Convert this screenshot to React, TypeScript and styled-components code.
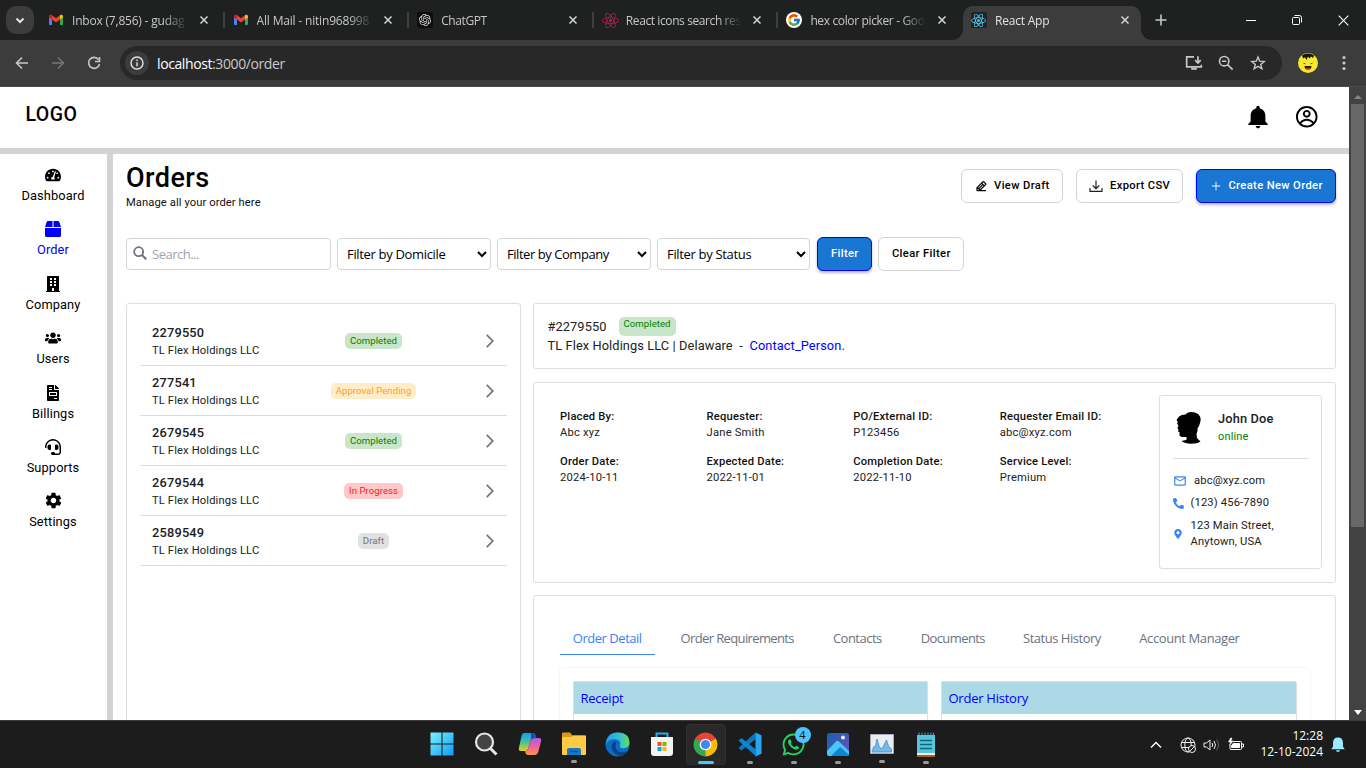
import React from "react";
import styled, { createGlobalStyle, css } from "styled-components";
import {
  FaTachometerAlt, FaBox, FaBuilding, FaUsers, FaHeadset, FaFileInvoice,
  FaReact, FaWhatsapp, FaPhoneAlt, FaMapMarkerAlt,
} from "react-icons/fa";
import { IoMdNotifications, IoMdSettings } from "react-icons/io";
import { CgProfile } from "react-icons/cg";
import { MdArrowForwardIos, MdMailOutline } from "react-icons/md";
import { AiOutlinePlus } from "react-icons/ai";
import { PiPencilLineBold } from "react-icons/pi";
import { FcGoogle } from "react-icons/fc";
import { SiOpenai } from "react-icons/si";

const ui = `"Segoe UI", "Open Sans", "Noto Sans", sans-serif`;

const Global = createGlobalStyle`
  * { box-sizing: border-box; }
  body { margin: 0; background: #fff; overflow: hidden; }
  svg { display: block; flex: none; }
`;

const Screen = styled.div`
  width: 1366px; height: 768px; display: flex; flex-direction: column; overflow: hidden;
  font-family: Roboto, sans-serif; color: #212121;
`;
const Spacer = styled.div<{ $w: number }>`width: ${p => p.$w}px; flex: none;`;

/* ---------- browser chrome ---------- */
const TabStrip = styled.div`
  height: 40px; flex: none; background: #1f2120; display: flex; align-items: center;
  font: 12px ${ui}; color: #c7c7c7; padding-left: 6px;
`;
const TabSearch = styled.div`
  width: 28px; height: 28px; border-radius: 10px; background: #3c3c3c;
  display: grid; place-items: center; flex: none;
`;
const Tab = styled.div<{ $w: number; $active?: boolean }>`
  width: ${p => p.$w}px; height: 34px; align-self: flex-end; flex: none;
  display: flex; align-items: center; padding: 0 ${p => (p.$active ? 10 : 13)}px 6px 8px;
  position: relative;
  ${p => p.$active && css`
    background: #3c3c3c; color: #e3e3e3; border-radius: 10px 10px 0 0;
    &::before, &::after {
      content: ""; position: absolute; bottom: 0; width: 10px; height: 10px;
    }
    &::before { left: -10px; background: radial-gradient(circle at 0 0, transparent 9.5px, #3c3c3c 10px); }
    &::after { right: -10px; background: radial-gradient(circle at 100% 0, transparent 9.5px, #3c3c3c 10px); }
  `}
`;
const Favicon = styled.div<{ $bg?: string; $round?: boolean }>`
  width: 16px; height: 16px; margin-right: 8px; display: grid; place-items: center; flex: none;
  background: ${p => p.$bg || "transparent"}; border-radius: ${p => (p.$round ? "50%" : "2px")};
`;
const TabTitle = styled.span<{ $ls: number }>`
  width: 116px; overflow: hidden; white-space: nowrap; line-height: 18px; padding-top: 1px; flex: none;
  letter-spacing: ${p => p.$ls}px;
  -webkit-mask-image: linear-gradient(90deg, #000 92px, transparent 116px);
  mask-image: linear-gradient(90deg, #000 92px, transparent 116px);
`;
const TabClose = styled.div`margin-left: auto; display: grid; place-items: center; width: 12px; height: 16px;`;
const TabSep = styled.div`width: 2px; height: 16px; background: #3e4040; flex: none;`;
const WindowButtons = styled.div`
  display: flex; align-items: center; margin-left: auto;
  & > div { width: 46px; display: grid; place-items: center; }
`;
const Toolbar = styled.div`
  height: 47px; flex: none; background: #3c3c3c; border-bottom: 1px solid #4a4a4a;
  display: flex; align-items: center; padding-left: 4px;
`;
const ToolButton = styled.div<{ $w?: number }>`
  width: ${p => p.$w ?? 36}px; height: 34px; display: grid; place-items: center; flex: none;
`;
const Omnibox = styled.div`
  width: 1162px; height: 34px; margin-left: 8px; border-radius: 17px; background: #282828; flex: none;
  display: flex; align-items: center; padding: 0 8px 0 5px; color: #c9c9c9; font: 14px ${ui};
`;
const InfoDot = styled.div`
  width: 24px; height: 24px; border-radius: 50%; background: #3c3c3c; display: grid; place-items: center;
`;
const Url = styled.span`
  margin-left: 8px; flex: 1; letter-spacing: -0.4px;
  b { font-weight: 400; color: #fff; }
`;

/* ---------- page ---------- */
const Viewport = styled.div`height: 633px; flex: none; display: flex; background: #fff; overflow: hidden;`;
const Page = styled.div`width: 1349px; display: flex; flex-direction: column; flex: none;`;
const Scrollbar = styled.div`
  width: 17px; background: #424242; display: flex; flex-direction: column; align-items: center;
  justify-content: space-between; padding: 8px 0 5px;
`;
const Thumb = styled.div`width: 13px; height: 423px; background: #686868; margin: 5px 0 auto;`;

const Header = styled.header`
  height: 67px; flex: none; border-bottom: 6px solid #d3d3d3; display: flex;
  justify-content: space-between; align-items: center; padding: 0 31px 1px 25.5px;
`;
const Logo = styled.div`
  font-weight: 500; font-size: 19.5px; color: #000; letter-spacing: 0.45px; line-height: 24px; margin-bottom: 4px;
`;
const HeaderIcons = styled.div`display: flex; align-items: center; gap: 22.5px; color: #000;`;

const Body = styled.div`display: flex; flex: 1; min-height: 0;`;
const Sidebar = styled.nav`
  width: 113px; border-right: 6px solid #d3d3d3; flex: none; display: flex; flex-direction: column;
  padding: 13px 1px 0 0;
`;
const NavItem = styled.a<{ $active?: boolean }>`
  height: 54.4px; display: flex; flex-direction: column; align-items: center; color: ${p => (p.$active ? "#0000ff" : "#000")};
  font-size: 12.8px; line-height: 19px; letter-spacing: 0.12px; gap: 3px;
  svg { color: ${p => (p.$active ? "#0000ff" : "#000")}; }
`;
const GearIcon = styled(IoMdSettings)`width: 19px; height: 19px; margin: -2px 0 -1px;`;

const Main = styled.main`flex: 1; min-width: 0; padding: 9px 13px 0; display: flex; flex-direction: column;`;
const TitleRow = styled.div`display: flex; justify-content: space-between; height: 74px; flex: none;`;
const Title = styled.h1`
  margin: 0; font-weight: 500; font-size: 27px; line-height: 30px; color: #000; letter-spacing: 0.45px;
`;
const Subtitle = styled.div`font-size: 11.2px; line-height: 16px; color: #111; letter-spacing: 0.09px; margin-top: 2px;`;
const Actions = styled.div`display: flex; gap: 13px; padding-top: 6px;`;
const Button = styled.button<{ $w: number; $primary?: boolean }>`
  width: ${p => p.$w}px; height: 34px; border-radius: 6px; border: 1px solid ${p => (p.$primary ? "#0000ff" : "#d3d3d3")};
  background: ${p => (p.$primary ? "#1976d2" : "#fff")}; color: ${p => (p.$primary ? "#fff" : "#000")};
  font: 500 11.2px/16px Roboto, sans-serif; letter-spacing: 0.36px; white-space: nowrap;
  display: flex; align-items: center; justify-content: center; gap: 6.5px; padding: 0 0 0 0.7px; flex: none;
  box-shadow: ${p => (p.$primary ? "0 2px 3px rgba(0,0,0,.28)" : "none")};
`;
const FilterRow = styled.div`display: flex; align-items: center; height: 34px; flex: none;`;
const SearchBox = styled.div`
  width: 205px; height: 32px; border: 1px solid #d1d5db; border-radius: 4px; margin-right: 6px;
  display: flex; align-items: center; gap: 5.5px; padding-left: 5.5px; font: 13px ${ui}; color: #9ca3af;
  letter-spacing: -0.5px;
  svg { margin-bottom: 2px; }
`;
const Select = styled.select<{ $w: number; $ls?: number }>`
  width: ${p => p.$w}px; height: 32px; border: 1px solid #d1d5db; border-radius: 4px; background: #fff; color: #000;
  font: 13px ${ui}; letter-spacing: ${p => p.$ls ?? -0.33}px; padding: 0 0 0 5px; margin-right: 6px;
`;

const Columns = styled.div`display: flex; gap: 12px; margin-top: 32px; flex: 1; min-height: 0; overflow: hidden;`;
const Panel = styled.section`
  border: 1px solid #dedede; border-radius: 3px; background: #fff; flex: none;
`;
const ListPanel = styled(Panel)`width: 395px; height: 500px; padding: 12px 13px;`;
const Row = styled.div`
  height: 50px; border-bottom: 1px solid #dcdcdc; display: grid; align-items: center;
  grid-template-columns: 155px 133px 1fr; padding-left: 12px;
`;
const RowNo = styled.div`font-weight: 500; font-size: 12.8px; line-height: 17px; letter-spacing: 0.2px; padding-top: 1px; box-sizing: content-box;`;
const RowName = styled.div`font-size: 11.2px; line-height: 16px; letter-spacing: 0.13px; margin-top: 2px;`;
const Center = styled.div`display: flex; justify-content: center;`;
const tones = {
  done: ["#c8e6c9", "#008000"], pending: ["#ffecc8", "#ffa028"], progress: ["#ffc9c9", "#ff1a1a"], draft: ["#e0e2e4", "#757575"],
};
type Tone = keyof typeof tones;
const Badge = styled.span<{ $tone: Tone; $tall?: boolean }>`
  background: ${p => tones[p.$tone][0]}; color: ${p => tones[p.$tone][1]}; border-radius: 5px; padding: 0 5px;
  height: ${p => (p.$tall ? 19 : 16)}px; font-size: 9.6px; line-height: ${p => (p.$tall ? 14 : 15)}px;
  letter-spacing: 0.05px; white-space: nowrap;
`;
const Chevron = styled(MdArrowForwardIos)`margin-left: auto; margin-right: 9px; color: #757575;`;

const Right = styled.div`flex: 1; display: flex; flex-direction: column;`;
const Summary = styled(Panel)`
  height: 66px; padding: 13px 13.5px; font-size: 12.8px; line-height: 19px; letter-spacing: 0.1px; margin-bottom: 13px;
`;
const SummaryTop = styled.div`display: flex; gap: 12px; height: 19px;`;
const Link = styled.a`color: #0000ff;`;
const DetailPanel = styled(Panel)`
  height: 201px; padding: 12px 13px; display: flex; justify-content: space-between; margin-bottom: 12px;
`;
const Fields = styled.dl`
  margin: 0; padding: 14px 0 0 13px; display: grid; grid-template-columns: repeat(4, 146.6px);
  grid-auto-rows: 45px; font-size: 11.2px; line-height: 16px; letter-spacing: 0.2px; align-content: start;
  dt { font-weight: 500; color: #111; } dd { margin: 0; }
`;
const Card = styled.aside`
  width: 163px; height: 174px; border: 1px solid #dedede; border-radius: 3px; padding: 13px 12px 0 13px;
  font-size: 11.2px; line-height: 16px; letter-spacing: 0.15px;
`;
const Person = styled.div`display: flex; gap: 13px; height: 50px; border-bottom: 1px solid #dcdcdc; margin-bottom: 11px;`;
const PersonName = styled.div`font-weight: 500; font-size: 12.8px; line-height: 20px;`;
const Online = styled.div`color: #008000; font-size: 11px; line-height: 16px;`;
const ContactLine = styled.div<{ $gap?: number; $h?: number }>`
  display: flex; align-items: center; gap: ${p => p.$gap ?? 6}px; min-height: ${p => p.$h ?? 22}px;
  svg { color: #3b82f6; }
`;
const TabsPanel = styled(Panel)`height: 300px; padding: 25px 25px 0 26px;`;
const TabList = styled.div`display: flex; gap: 12.8px; font: 13px ${ui};`;
const TabItem = styled.div<{ $active?: boolean; $w: number; $ls: number }>`
  width: ${p => p.$w}px; height: 34px; padding: 8px 0 0 12.8px; line-height: 18px; white-space: nowrap; letter-spacing: ${p => p.$ls}px;
  color: ${p => (p.$active ? "#3b82f6" : "#6b7280")}; border-bottom: 1px solid ${p => (p.$active ? "#3b82f6" : "transparent")};
`;
const Inner = styled.div`
  margin-top: 13px; height: 200px; padding: 13px; display: grid; grid-template-columns: 355px 356px; gap: 13px;
  box-shadow: 0 0 2px rgba(0,0,0,.14); border-radius: 3px;
`;
const Box = styled.div`border: 1px solid #dedede; border-radius: 2px;`;
const BoxHead = styled.div`
  height: 32px; background: #add8e6; color: #0000ff; font: 13px/32px ${ui}; padding-left: 6.5px; letter-spacing: -0.25px;
`;

/* ---------- taskbar ---------- */
const Taskbar = styled.footer`
  height: 48px; flex: none; background: #1c1c1c; border-top: 1px solid #3b3b3b; display: flex; color: #fff;
  padding-left: 419.5px; font: 12px ${ui};
`;
const TaskButton = styled.div<{ $focus?: boolean }>`
  width: 44px; height: 47px; flex: none; display: flex; flex-direction: column; align-items: center; position: relative;
  padding-top: 11px;
  ${p => p.$focus && css`&::before { content: ""; position: absolute; inset: 3px 2px; border-radius: 4px; background: #292929; border: 1px solid #303030; }`}
  svg { position: relative; }
`;
const Run = styled.i<{ $focus?: boolean }>`
  width: ${p => (p.$focus ? 16 : 6)}px; height: 3px; border-radius: 2px; margin-top: 4px; position: relative;
  background: ${p => (p.$focus ? "#4cc2ff" : "#9a9a9a")};
`;
const Count = styled.span`
  position: absolute; left: 23px; top: 6px; width: 16px; height: 16px; border-radius: 50%; background: #4cc2ff;
  color: #111; font: 11px/16px ${ui}; text-align: center;
`;
const Tray = styled.div`margin-left: auto; display: flex; align-items: center; padding-right: 21px;`;
const Clock = styled.div`
  text-align: right; line-height: 16px; margin: 0 8px 0 15px; width: 63px; letter-spacing: 0; white-space: nowrap;
  padding-bottom: 1px;
`;

/* ---------- drawings ---------- */
const Gmail = () => (
  <svg width="16" height="16" viewBox="0 0 16 16">
    <path d="M1 4v8.200c0 .5.4.8.8.8H4V6.500z" fill="#4285f4" /><path d="M15 4v8.200c0 .5-.4.8-.8.8H12V6.500z" fill="#34a853" />
    <path d="M1 4.500C1 2.800 2.800 2.300 4 3.200l4 3 4-3V7.500l-4 3-4-3L1 5.400z" fill="#ea4335" />
    <path d="M12 3.200c1.200-.9 3-.4 3 1.300v.9l-3 2.200z" fill="#fbbc04" /><path d="M1 4.500v.9l3 2.200V3.200C2.800 2.300 1 2.800 1 4.500z" fill="#c5221f" />
  </svg>
);
const X = ({ s = 8, w = 1.5, c = "#d5d5d5" }) => (
  <svg width={s} height={s} viewBox="0 0 8 8" stroke={c} strokeWidth={(w * 8) / s}><path d="M.5.5l7 7M7.500.5l-7 7" /></svg>
);
const Line = ({ d, s = 16, w = 1.6, c = "#c7c7c7", f = "none" }: { d: string; s?: number; w?: number; c?: string; f?: string }) => (
  <svg width={s} height={s} viewBox="0 0 16 16" fill={f} stroke={c} strokeWidth={w}><path d={d} /></svg>
);
const SearchIcon = () => (
  <svg width="14" height="14" viewBox="0 0 14 14" fill="none" stroke="#6b7280" strokeWidth="1.800">
    <circle cx="5.700" cy="5.700" r="4.500" /><path d="M9 9l4.200 4.200" strokeWidth="2.100" />
  </svg>
);
const ExportIcon = () => (
  <svg width="14" height="14" viewBox="0 0 14 14" fill="none" stroke="#222" strokeWidth="1.200">
    <path d="M7 1.500v8M3.700 6.500L7 9.700l3.300-3.200M1 9v3.400h12V9" />
  </svg>
);
const Chrome = () => (
  <svg width="25" height="25" viewBox="0 0 24 24">
    <path d="M12 12L2.050 6.250A11.500 11.500 0 0 1 21.950 6.250z" fill="#ea4335" />
    <path d="M12 12L21.950 6.250A11.500 11.500 0 0 1 12 23.500z" fill="#fbbc04" />
    <path d="M12 12V23.500A11.500 11.500 0 0 1 2.050 6.250z" fill="#34a853" />
    <path d="M12 6.400h9.950L21.950 6.250 12 5z" fill="#ea4335" /><path d="M16.850 14.800L12 23.500 12 16z" fill="#fbbc04" />
    <path d="M7.150 14.800L2.050 6.250 8 9z" fill="#34a853" />
    <circle cx="12" cy="12" r="5.600" fill="#fff" /><circle cx="12" cy="12" r="4.400" fill="#4285f4" />
  </svg>
);

const tabs = [
  { t: "Inbox (7,856) - gudag", icon: <Favicon><Gmail /></Favicon>, ls: -0.2 },
  { t: "All Mail - nitin968998", icon: <Favicon><Gmail /></Favicon>, ls: -0.18 },
  { t: "ChatGPT", icon: <Favicon $bg="#0d0d0d"><SiOpenai size={12} color="#ddd" /></Favicon>, ls: -0.4 },
  { t: "React icons search res", icon: <Favicon><FaReact size={17} color="#c2185b" /></Favicon>, ls: -0.4 },
  { t: "hex color picker - Goo", icon: <Favicon $bg="#fff" $round><FcGoogle size={14} /></Favicon>, ls: -0.36 },
];
const nav = [
  ["Dashboard", FaTachometerAlt], ["Order", FaBox], ["Company", FaBuilding], ["Users", FaUsers],
  ["Billings", FaFileInvoice], ["Supports", FaHeadset], ["Settings", null],
] as const;
const orders: [string, string, Tone][] = [
  ["2279550", "Completed", "done"], ["277541", "Approval Pending", "pending"], ["2679545", "Completed", "done"],
  ["2679544", "In Progress", "progress"], ["2589549", "Draft", "draft"],
];
const fields = [
  ["Placed By:", "Abc xyz"], ["Requester:", "Jane Smith"], ["PO/External ID:", "P123456"], ["Requester Email ID:", "abc@xyz.com"],
  ["Order Date:", "2024-10-11"], ["Expected Date:", "2022-11-01"], ["Completion Date:", "2022-11-10"], ["Service Level:", "Premium"],
];
const detailTabs: [string, number, number][] = [
  ["Order Detail", 95, -0.47], ["Order Requirements", 139.5, -0.63], ["Contacts", 75, -0.5], ["Documents", 89.5, -0.6],
  ["Status History", 103.5, -0.47], ["Account Manager", 126, -0.4],
];

function BrowserTop() {
  return (
    <>
      <TabStrip>
        <TabSearch><Line d="M4.500 6.500L8 10l3.500-3.500" w={2} c="#e3e3e3" /></TabSearch>
        <Spacer $w={6} />
        {tabs.map(t => (
          <React.Fragment key={t.t}>
            <Tab $w={182.6}>{t.icon}<TabTitle $ls={t.ls}>{t.t}</TabTitle><TabClose><X /></TabClose></Tab>
            {t !== tabs[tabs.length - 1] ? <TabSep /> : <Spacer $w={2} />}
          </React.Fragment>
        ))}
        <Tab $w={178} $active>
          <Favicon $bg="#20232a"><FaReact size={15} color="#61dafb" /></Favicon>
          <TabTitle $ls={-0.2}>React App</TabTitle><TabClose><X /></TabClose>
        </Tab>
        <ToolButton $w={40}><Line d="M8 2.500v11M2.500 8h11" /></ToolButton>
        <WindowButtons>
          <div><Line d="M3 8.500h10" w={1} c="#fff" /></div>
          <div><Line d="M3.500 6.500q0-1 1-1h5q1 0 1 1v5q0 1-1 1h-5q-1 0-1-1zM5.500 3.500h5q2 0 2 2v5" w={1} c="#fff" /></div>
          <div><X s={11} w={1.1} c="#fff" /></div>
        </WindowButtons>
      </TabStrip>
      <Toolbar>
        <ToolButton><Line d="M14 8H3M8 2.500L2.500 8 8 13.500" /></ToolButton>
        <ToolButton><Line d="M2 8h11M8 2.500L13.500 8 8 13.500" c="#777" /></ToolButton>
        <ToolButton><Line d="M12.500 4.500A5.500 5.500 0 1 0 13.500 9M13.500 2v4.500H9" /></ToolButton>
        <Omnibox>
          <InfoDot>
            <svg width="14" height="14" viewBox="0 0 14 14" fill="none" stroke="#e3e3e3" strokeWidth="1.400">
              <circle cx="7" cy="7" r="6" /><path d="M7 6.200v4M7 3.600v1.400" />
            </svg>
          </InfoDot>
          <Url><b>localhost</b>:3000/order</Url>
          <ToolButton $w={32}><Line s={18} d="M8 2.500H1.500v9h13V9.500M11.500 2v6M9 5.500L11.500 8 14 5.500M5.500 13.200h5" w={1.5} /></ToolButton>
          <ToolButton $w={32}><Line d="M6.200 1.500a4.700 4.700 0 1 0 0 9.400 4.700 4.700 0 1 0 0-9.400M9.600 9.600l5 5M4 6.200h4.400" w={1.6} /></ToolButton>
          <ToolButton $w={32}><Line d="M8 2l1.700 4.200 4.500.3-3.500 2.900 1.200 4.400L8 11.400l-3.900 2.400 1.200-4.400L1.800 6.500l4.500-.3z" w={1.4} /></ToolButton>
        </Omnibox>
        <ToolButton $w={52}>
          <svg width="20" height="20" viewBox="0 0 20 20">
            <circle cx="10" cy="10" r="10" fill="#f6e92b" />
            <path d="M4 2.500Q10-1.500 16 2.500L15 5l-2-1.500-1.500 2-1.500-2L8.500 7 7 4.200 5 5.500z" fill="#151515" />
            <path d="M5.500 10.200l2 .6M14.500 10.200l-2 .6" stroke="#665f20" /><path d="M6.500 13h7q0 3.500-3.500 3.500T6.500 13z" fill="#222" /><path d="M8 15.700h4" stroke="#e22" strokeWidth="1.500" />
          </svg>
        </ToolButton>
        <ToolButton $w={20}>
          <svg width="4" height="16" fill="#c7c7c7"><circle cx="2" cy="2.500" r="1.600" /><circle cx="2" cy="8" r="1.600" /><circle cx="2" cy="13.500" r="1.600" /></svg>
        </ToolButton>
      </Toolbar>
    </>
  );
}

function Profile() {
  return (
    <Card>
      <Person>
        <svg width="32" height="36" viewBox="0 0 32 36">
          <path d="M12.500 5.500Q14 3 17.700 3q3.500 0 5.500 1 3 1 3.800 3.500 1.300 2.500.3 5.500L26 17l-1.500 2.500V22L23.500 25l.5 4 3.500 3.500q-3 2.200-9.500 2.200-6 0-9.500-2.700l4.500-1q1.500-1.500.3-3H8.500l-2-1.500V23l-1.500-.5.5-2L4.300 19l1.200-2L4 14l.8-1L3.500 11l2.500-3.500Q8.500 5.500 12.500 5.500z" fill="#000" />
        </svg>
        <div><PersonName>John Doe</PersonName><Online>online</Online></div>
      </Person>
      <ContactLine $gap={7}><MdMailOutline size={14} />abc@xyz.com</ContactLine>
      <ContactLine $gap={6.5}><FaPhoneAlt size={11} />(123) 456-7890</ContactLine>
      <ContactLine $gap={7.5} $h={39}><FaMapMarkerAlt size={10} /><span>123 Main Street,<br />Anytown, USA</span></ContactLine>
    </Card>
  );
}

const taskIcons: { icon: React.ReactNode; run?: boolean; focus?: boolean; count?: number }[] = [
  { icon: <svg width="24" height="24" viewBox="0 0 24 24"><defs><linearGradient id="win" x1="0" y1="0" x2="1" y2="1"><stop stopColor="#7df0fb" /><stop offset="1" stopColor="#0c9cf2" /></linearGradient></defs><path d="M.5.500h11v11H.5zM12.500.5h11v11h-11zM.5 12.500h11v11H.5zM12.500 12.500h11v11h-11z" fill="url(#win)" /></svg> },
  { icon: <svg width="24" height="24" viewBox="0 0 24 24" fill="#444" stroke="#e6e6e6" strokeWidth="2.200"><circle cx="10.500" cy="10" r="8.500" /><path d="M16.500 16.500l6 6" strokeWidth="3" /></svg> },
  { icon: <svg width="24" height="24" viewBox="0 0 24 24"><defs><linearGradient id="ca" x1="0" y1="0" x2="0" y2="1"><stop stopColor="#1b9be8" /><stop offset=".5" stopColor="#3fc4a0" /><stop offset="1" stopColor="#f5cb1a" /></linearGradient><linearGradient id="cb" x1="0" y1="0" x2="0" y2="1"><stop stopColor="#a55ff0" /><stop offset=".5" stopColor="#f0609a" /><stop offset="1" stopColor="#ff9250" /></linearGradient></defs><path d="M6 1h9q2 0 2.500 2l.7 3h-3q-2 0-2.700 2.200L10 17q-.7 2-3 2H3q-3 0-2-3.500L3.500 4Q4.200 1 6 1z" fill="url(#ca)" /><path d="M13 1h2q2 0 2.500 2l.7 3h-3q-1.500 0-2.200 1z" fill="#1a45d0" /><path d="M17 6h4q3 0 2 3.500L20.500 19q-1 4-4 4H10q-2 0-2.500-2L7 19q2 0 3-2l2.500-8.500Q13.500 6 17 6z" fill="url(#cb)" /></svg> },
  { run: true, icon: <svg width="24" height="24" viewBox="0 0 24 24"><path d="M0 1.500Q0 .5 1 .5h7l2.500 3H23q1 0 1 1V12H0z" fill="#d89b13" /><path d="M0 6q0-1 1-1h8l2-1.500h12q1 0 1 1V22q0 1-1 1H1q-1 0-1-1z" fill="#fdcb45" /><path d="M5 23v-5q0-2 2-2h10q2 0 2 2v5z" fill="#1479c9" /><path d="M8 19.500h8" stroke="#0a4f8c" strokeWidth="1.500" /></svg> },
  { icon: <svg width="25" height="25" viewBox="0 0 24 24"><defs><linearGradient id="ed" x1="0" y1="0" x2="1" y2="0"><stop stopColor="#1f9be0" /><stop offset=".6" stopColor="#35c1d4" /><stop offset="1" stopColor="#66e052" /></linearGradient></defs><circle cx="12" cy="12" r="11.500" fill="#0c6cc4" /><path d="M1 9.500Q3 .5 12 .5q11 0 11.500 9.500 0 5.500-6 5.500-4 0-3-2.500 1-6-5.500-6Q3 7 .8 12z" fill="url(#ed)" /><path d="M9 9q-4 3-2 8 2.500 5 8 6 4-1 6.500-4.500-8 3-11-2.500-1-3 .5-6z" fill="#0b3f86" /></svg> },
  { icon: <svg width="24" height="25" viewBox="0 0 24 25"><path d="M6.500 6V1.500h11V6" fill="none" stroke="#27aee8" strokeWidth="2" /><path d="M1 5h22v16q0 3-3 3H4q-3 0-3-3z" fill="#f2f2f2" /><path d="M7.500 10h4v4h-4z" fill="#f25022" /><path d="M12.500 10h4v4h-4z" fill="#7fba00" /><path d="M7.500 15h4v4h-4z" fill="#00a4ef" /><path d="M12.500 15h4v4h-4z" fill="#ffb900" /></svg> },
  { run: true, focus: true, icon: <Chrome /> },
  { run: true, icon: <svg width="24" height="25" viewBox="0 0 24 25"><path d="M17.500.5v6.800L3.500 18.500l-3-2.500z" fill="#0b78c4" /><path d="M17.500 24v-6.800L3.500 6l-3 2.500z" fill="#0d84d0" /><path d="M17.500.5l6 2.700v18.600l-6 2.700z" fill="#2aa5ee" /></svg> },
  { run: true, count: 4, icon: <FaWhatsapp size={25} color="#25d366" /> },
  { run: true, icon: <svg width="24" height="25" viewBox="0 0 24 25"><defs><linearGradient id="ph" x1="0" y1="0" x2="1" y2="1"><stop stopColor="#1462b0" /><stop offset="1" stopColor="#6f50b8" /></linearGradient></defs><rect x="1" y="1" width="22" height="23" rx="2.500" fill="url(#ph)" /><path d="M1 19l9-9.500q1.500-1.500 3 0L23 19v2.500q0 2.500-2.500 2.500h-17Q1 24 1 21.500z" fill="#45c8f5" /><path d="M5 24l8-8q1.500-1 3 .5L23 23l-2 1z" fill="#1283d2" /><circle cx="17" cy="5.500" r="2" fill="#e8f4ff" /></svg> },
  { run: true, icon: <svg width="24" height="24" viewBox="0 0 24 24"><path d="M.5 2.500h23v19H.5z" fill="#e9edf2" stroke="#aab" /><path d="M2 20l1.500-5 2-1 1.500-7 2 7 2 3 2-2 2-4 1.500-3 2 6 3 3V20z" fill="#74b9e8" stroke="#3b8fd0" strokeWidth=".8" /></svg> },
  { run: true, icon: <svg width="20" height="25" viewBox="0 0 20 25"><path d="M1 3h18v18H1z" fill="#58c4dc" /><path d="M1 21h18v2H1z" fill="#eee" /><path d="M1 23h18v2H1z" fill="#b35a1a" /><path d="M4 8.500h12M4 12.500h12M4 16.500h12" stroke="#11657d" strokeWidth="1.600" /><path d="M3 3V.5M6 3V.5M9 3V.5M12 3V.5M15 3V.5M17.500 3V.5" stroke="#2b93ae" strokeWidth="1.200" /></svg> },
];

export default function App() {
  return (
    <Screen>
      <Global />
      <BrowserTop />
      <Viewport>
        <Page>
          <Header>
            <Logo>LOGO</Logo>
            <HeaderIcons><IoMdNotifications size={28} /><CgProfile size={23.5} /></HeaderIcons>
          </Header>
          <Body>
            <Sidebar>
              {nav.map(([label, Icon], i) => (
                <NavItem key={label} $active={i === 1}>{Icon ? <Icon size={16} /> : <GearIcon />}{label}</NavItem>
              ))}
            </Sidebar>
            <Main>
              <TitleRow>
                <div><Title>Orders</Title><Subtitle>Manage all your order here</Subtitle></div>
                <Actions>
                  <Button $w={102}><PiPencilLineBold size={12.5} />View Draft</Button>
                  <Button $w={107}><ExportIcon />Export CSV</Button>
                  <Button $w={140} $primary><AiOutlinePlus size={12} />Create New Order</Button>
                </Actions>
              </TitleRow>
              <FilterRow>
                <SearchBox><SearchIcon />Search...</SearchBox>
                <Select $w={154}><option>Filter by Domicile</option></Select>
                <Select $w={154} $ls={-0.45}><option>Filter by Company</option></Select>
                <Select $w={153}><option>Filter by Status</option></Select>
                <Spacer $w={1} />
                <Button $w={55} $primary>Filter</Button>
                <Spacer $w={6} />
                <Button $w={86}>Clear Filter</Button>
              </FilterRow>
              <Columns>
                <ListPanel>
                  {orders.map(([no, status, tone]) => (
                    <Row key={no}>
                      <div><RowNo>{no}</RowNo><RowName>TL Flex Holdings LLC</RowName></div>
                      <Center><Badge $tone={tone}>{status}</Badge></Center>
                      <Chevron size={16} />
                    </Row>
                  ))}
                </ListPanel>
                <Right>
                  <Summary>
                    <SummaryTop><span>#2279550</span><Badge $tone="done" $tall>Completed</Badge></SummaryTop>
                    <div>TL Flex Holdings LLC | Delaware &nbsp;-&nbsp; <Link>Contact_Person.</Link></div>
                  </Summary>
                  <DetailPanel>
                    <Fields>{fields.map(([k, v]) => <div key={k}><dt>{k}</dt><dd>{v}</dd></div>)}</Fields>
                    <Profile />
                  </DetailPanel>
                  <TabsPanel>
                    <TabList>{detailTabs.map(([t, w, ls], i) => <TabItem key={t} $w={w} $ls={ls} $active={i === 0}>{t}</TabItem>)}</TabList>
                    <Inner>
                      <Box><BoxHead>Receipt</BoxHead></Box>
                      <Box><BoxHead>Order History</BoxHead></Box>
                    </Inner>
                  </TabsPanel>
                </Right>
              </Columns>
            </Main>
          </Body>
        </Page>
        <Scrollbar>
          <svg width="8" height="4"><path d="M4 0l4 4H0z" fill="#858585" /></svg>
          <Thumb />
          <svg width="8" height="5"><path d="M0 0h8L4 5z" fill="#fff" /></svg>
        </Scrollbar>
      </Viewport>
      <Taskbar>
        {taskIcons.map((t, i) => (
          <TaskButton key={i} $focus={t.focus}>
            {t.icon}
            {t.count && <Count>{t.count}</Count>}
            {t.run && <Run $focus={t.focus} />}
          </TaskButton>
        ))}
        <Tray>
          <Line d="M3 10.500L8 5.500l5 5" w={1.4} c="#fff" />
          <Spacer $w={16} />
          <svg width="16" height="16" viewBox="0 0 16 16" fill="none" stroke="#eee"><circle cx="8" cy="8" r="7" /><ellipse cx="8" cy="8" rx="3.200" ry="7" /><path d="M1.500 5.500h13M1.500 10.500h8" /><circle cx="12" cy="12" r="3.500" fill="#1c1c1c" /><path d="M9.800 14.200l4.400-4.400" /></svg>
          <Spacer $w={7} />
          <svg width="17" height="16" viewBox="0 0 17 16" fill="none" stroke="#eee"><path d="M1 6v4h2.500L7 13V3L3.500 6zM9 6q1.500 2 0 4M11 4q3 4 0 8" /><path d="M13.500 2.500q4 5.500 0 11" stroke="#666" /></svg>
          <Spacer $w={7} />
          <svg width="18" height="16" viewBox="0 0 18 16" fill="none" stroke="#fff"><path d="M6 4.500h7.500q1 0 1 1v6q0 1-1 1H4q-1 0-1-1V8M15 7h1.500v3H15" /><path d="M6 6.500h6.500v4h-8V9z" fill="#fff" /><path d="M3.500 1L1.500 5h2l-1 3.500L6 4H4l1-3z" fill="#fff" strokeWidth=".5" /></svg>
          <Clock>12:28<br />12-10-2024</Clock>
          <svg width="14" height="16" viewBox="0 0 14 16" fill="#99ebff"><path d="M7 .5q4.800 0 5 5.200v3.800l1.700 2.800H.3L2 9.500V5.700Q2.200.5 7 .5zM5 13.200h4Q8.800 15 7 15t-2-1.800z" /></svg>
        </Tray>
      </Taskbar>
    </Screen>
  );
}
